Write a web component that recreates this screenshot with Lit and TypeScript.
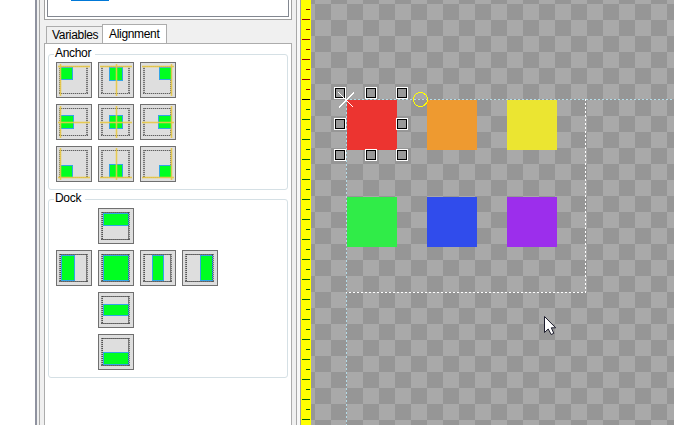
import { LitElement, html, svg, css } from "lit";
import { customElement, property } from "lit/decorators.js";

@customElement("align-button")
class AlignButton extends LitElement {
  @property() kind = "anchor";
  @property() pos = "0,0";

  static styles = css`
    :host { display: block; width: 36px; height: 36px; }
    svg { display: block; }
  `;

  render() {
    const anchor = this.kind === "anchor";
    const [a, b] = this.pos.split(",").map(Number);
    let rect: number[];
    if (anchor) {
      const size = a === 1 || b === 1 ? 14 : 13;
      const along = (i: number, start: number) => (i === 0 ? start : i === 1 ? 11 : 32 - size);
      rect = [along(a, 4), along(b, 5), size, size];
    } else {
      rect = [
        [5, 5, 26, 13], [5, 5, 14, 26], [5, 5, 26, 26],
        [12, 5, 12, 26], [18, 5, 13, 26], [5, 12, 26, 12], [5, 18, 26, 13],
      ][a];
    }
    const [x, y, w, h] = rect;
    const gx = [4, 18, 31][a];
    const gy = [4, 18, 31][b];
    return html`<svg width="36" height="36" viewBox="0 0 36 36">
      <rect x=".5" y=".5" width="35" height="35" fill="#dedede" stroke="#707070" />
      <path d="M3 4.5H32M3 31.5H32M4 4V32M31 4V32" fill="none" stroke="#b4b4b4" />
      <path d="M3 4.5H32M3 31.5H32" fill="none" stroke="#606060" stroke-dasharray="1 1" />
      <path d="M4 4V32M31 4V32" fill="none" stroke="#757575" stroke-width="2" stroke-dasharray="1 1" />
      <rect x=${x + 0.5} y=${y + 0.5} width=${w - 1} height=${h - 1} fill="#00ff21" stroke="#32a5e6" />
      ${anchor
        ? svg`<rect x=${gx - 1} y="2" width="3" height="32" fill="#efcf38" opacity=".25" />
              <rect x="2" y=${gy - 1} width="32" height="3" fill="#efcf38" opacity=".25" />
              <rect x=${gx} y="2" width="1" height="32" fill="#e8c848" opacity=".9" />
              <rect x="2" y=${gy} width="32" height="1" fill="#e8c848" opacity=".9" />`
        : svg`<path d="M4 4.5H32M4.5 4V32M31 31.5H4M30.5 32V4" fill="none" stroke="#303030" stroke-dasharray="1 1" opacity=".5" />`}
    </svg>`;
  }
}

@customElement("design-canvas")
class DesignCanvas extends LitElement {
  static styles = css`
    :host { display: block; flex: 1; min-width: 0; }
    svg { display: block; }
  `;

  render() {
    const blocks = [
      [36, 99, "#ec3430"], [116, 99, "#ee9a30"], [196, 99, "#ebe531"],
      [36, 197, "#30ec48"], [116, 197, "#304cec"], [196, 197, "#9c2eec"],
    ];
    const handles = [
      [29, 93], [60, 93], [91, 93], [29, 124], [91, 124], [29, 155], [60, 155], [91, 155],
    ];
    return html`<svg width="363" height="425" viewBox="0 0 363 425" shape-rendering="crispEdges">
      <defs>
        <pattern id="checks" x="4" y="4" width="32" height="32" patternUnits="userSpaceOnUse">
          <rect width="32" height="32" fill="#a9a9a9" />
          <path d="M0 0h16v16H0zM16 16h16v16H16z" fill="#969696" />
        </pattern>
      </defs>
      <rect width="363" height="425" fill="url(#checks)" />
      ${blocks.map(([x, y, c]) => svg`<rect x=${x} y=${y} width="50" height=${y === 99 ? 51 : 50} fill=${c} />`)}
      <path d="M35 99.5H363M35.5 100V425" stroke="#969696" fill="none" />
      <path d="M35 99.5H363M35.5 100V425" stroke="#b4dce8" stroke-dasharray="2 2" fill="none" />
      <path d="M274.5 99V292.5H35" stroke="#fff" stroke-dasharray="2 2" fill="none" />
      ${handles.map(([x, y]) => svg`<rect x=${x - 6} y=${y - 6} width="12" height="12" fill="#fff" />
        <rect x=${x - 5} y=${y - 5} width="10" height="10" fill="#000" />
        <rect x=${x - 4} y=${y - 4} width="8" height="8" fill="#999" />`)}
      <path d="M27.5 92.5L42 107" stroke="#fff" fill="none" />
      <path d="M28 107.5L43 92.5" stroke="#fff" stroke-width="1.7" fill="none" />
      <circle cx="109.5" cy="99.5" r="7" fill="none" stroke="#ff0" />
      <path d="M233.5 316.5V332.5L237.2 329L240.2 334.5L242.8 333.3L240.3 327.8H244.7Z" fill="#fff" stroke="#1c1c2c" shape-rendering="auto" />
    </svg>`;
  }
}

@customElement("app-root")
class AppRoot extends LitElement {
  static styles = css`
    :host {
      display: flex; width: 674px; height: 425px; overflow: hidden;
      background: #f0f0f0; color: #000;
      font: 12px "Liberation Sans", Arial, sans-serif; letter-spacing: -0.32px;
    }
    * { box-sizing: border-box; }
    .gutter { width: 37px; background: #fff; border-right: 2px solid #8f929f; }
    .rail { width: 3px; border-right: 1px solid #a8a8a8; }
    .rail.right { width: 4px; background: #f7f7f7; border-color: #a0a0a0; }
    .side { width: 257px; padding-left: 4px; display: flex; flex-direction: column; border-right: 1px solid #a8a8a8; }
    .upper { width: 248px; height: 20px; background: #fff; border: 1px solid #a0a0a0; border-top: 0; padding: 0 2px 2px; }
    .list { height: 17px; border: 1px solid #828790; border-top: 0; padding-left: 23px; }
    .chosen { width: 38px; height: 1px; background: #0078d7; }
    .tabs { display: flex; align-items: flex-end; height: 23px; padding-left: 2px; }
    .tab { height: 17px; width: 56px; border: 1px solid #acacac; border-right: 0; border-bottom: 0; padding-left: 5px; line-height: 17px; white-space: nowrap; }
    .tab.active { height: 20px; width: 65px; background: #fff; border-right: 1px solid #acacac; margin-bottom: -1px; padding-left: 6px; line-height: 19px; }
    .page { flex: 1; width: 248px; background: #fff; border: 1px solid #acacac; border-bottom: 0; padding: 10px 3px 0; }
    .group { border: 1px solid #d5e0e5; border-radius: 3px; padding: 7px 0 0 7px; height: 136px; }
    .group.dock { height: 179px; margin-top: 9px; padding-top: 8px; }
    .caption { position: absolute; margin: -16px 0 0 -2px; padding: 0 4px 0 1px; background: #fff; line-height: 15px; }
    .dock .caption { margin-top: -17px; }
    .grid { display: grid; grid-template-columns: repeat(4, 36px); gap: 6px; }
    .three { grid-template-columns: repeat(3, 36px); }
    .second { grid-column: 2; }
    .first { grid-column: 1; }
    .ruler { width: 10px; background: #ff0; }
    .ruler svg { display: block; }
  `;

  render() {
    const ticks = Array.from({ length: 42 }, (_, i) => 9 + i * 10);
    return html`
      <div class="gutter"></div>
      <div class="rail"></div>
      <div class="side">
        <div class="upper"><div class="list"><div class="chosen"></div></div></div>
        <div class="tabs"><div class="tab">Variables</div><div class="tab active">Alignment</div></div>
        <div class="page">
          <div class="group">
            <div class="caption">Anchor</div>
            <div class="grid three">
              ${[0, 1, 2].map((r) => [0, 1, 2].map((c) => html`<align-button pos="${c},${r}"></align-button>`))}
            </div>
          </div>
          <div class="group dock">
            <div class="caption">Dock</div>
            <div class="grid">
              ${[0, 1, 2, 3, 4, 5, 6].map((i) => html`<align-button class=${i === 1 ? "first" : i === 0 || i > 4 ? "second" : ""} kind="dock" pos="${i}"></align-button>`)}
            </div>
          </div>
        </div>
      </div>
      <div class="rail right"></div>
      <div class="ruler"><svg width="10" height="425">
        ${ticks.map((y, i) => svg`<rect x=${i % 2 ? 1 : 5} y=${y} width=${i % 2 ? 8 : 4} height="1" fill=${y < 99 ? "#900000" : y === 99 ? "#000" : "#006400"} />`)}
      </svg></div>
      <design-canvas></design-canvas>`;
  }
}
